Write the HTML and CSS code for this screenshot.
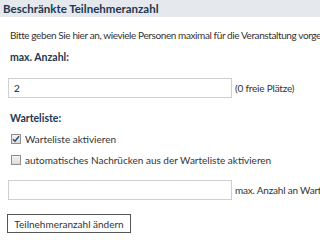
FILE: index.html
```html
<!DOCTYPE html>
<html lang="de">
<head>
<meta charset="UTF-8" />
<title>Beschränkte Teilnehmeranzahl</title>
<link rel="stylesheet" href="styles.css">
</head>
<body>

  <!-- Kopfzeile -->
  <div class="kopf">Beschränkte Teilnehmeranzahl</div>

  <div class="inhalt">
    <p class="hinweis">Bitte geben Sie hier an, wieviele Personen maximal für die Veranstaltung vorgesehen sind.</p>

    <h3 class="feld-titel titel-anzahl">max. Anzahl:</h3>
    <div class="feld-zeile">
      <input type="text" class="eingabe" value="2" />
      <span class="feld-info">(0 freie Plätze)</span>
    </div>

    <h3 class="feld-titel titel-warteliste">Warteliste:</h3>
    <label class="check-zeile">
      <span class="kasten">
        <svg width="8" height="8" viewBox="0 0 8 8"><path d="M1 4.2 L3 6.3 L7 1.2" fill="none" stroke="#2b4a6f" stroke-width="1.4"/></svg>
      </span>
      <span>Warteliste aktivieren</span>
    </label>
    <label class="check-zeile">
      <span class="kasten"></span>
      <span>automatisches Nachrücken aus der Warteliste aktivieren</span>
    </label>

    <div class="feld-zeile zeile-warteliste">
      <input type="text" class="eingabe" value="" />
      <span class="feld-info">max. Anzahl an Wartelistenplätzen</span>
    </div>

    <button class="knopf">Teilnehmeranzahl ändern</button>
  </div>

</body>
</html>
```

FILE: styles.css
```css
:root {
  --dunkel: #22374f;
  --text: #333;
  --rahmen: #cfcfcf;
}

* {
  margin: 0;
  padding: 0;
  box-sizing: border-box;
  font-family: Lato, 'Liberation Sans', sans-serif;
}

body {
  background: #fff;
  color: var(--text);
  font-size: 10px;
  width: 320px;
  height: 240px;
  overflow: hidden;
}

/* Kopfzeile */
.kopf {
  height: 17px;
  line-height: 17px;
  padding-left: 3px;
  background-color: #e5e9ee;
  color: var(--dunkel);
  font-size: 11.5px;
  font-weight: 700;
  white-space: nowrap;
}

.inhalt {
  padding: 11px 0 0 8px;
}

.hinweis {
  padding-left: 2px;
  white-space: nowrap;
  line-height: 14px;
  letter-spacing: -0.4px;
}

/* Überschriften der Felder */
.feld-titel {
  padding-left: 2px;
  color: var(--dunkel);
  font-size: 10.5px;
  font-weight: 700;
  line-height: 14px;
}

.titel-anzahl {
  margin-top: 8px;
}

.titel-warteliste {
  margin-top: 13px;
}

.feld-zeile {
  display: flex;
  align-items: center;
  gap: 3px;
  margin-top: 14px;
  white-space: nowrap;
}

.zeile-warteliste {
  margin-top: 13px;
}

.feld-info {
  letter-spacing: -0.2px;
}

.eingabe {
  flex-shrink: 0;
  width: 224px;
  height: 20px;
  border: 1px solid var(--rahmen);
  padding: 0 5px;
  font-size: 10px;
  color: #222;
  background: #fff;
  outline: none;
}

/* Checkboxen */
.check-zeile {
  display: flex;
  align-items: center;
  gap: 4px;
  padding-left: 3px;
  height: 14px;
  margin-top: 7px;
  white-space: nowrap;
}

.kasten {
  width: 10px;
  height: 10px;
  border: 1px solid #8e8e8e;
  background: linear-gradient(#f4f4f4, #dcdcdc);
  display: flex;
  align-items: center;
  justify-content: center;
}

.knopf {
  display: block;
  margin-top: 14px;
  margin-left: -1px;
  width: 124px;
  height: 19px;
  background: #fff;
  border: 1px solid #555;
  color: var(--text);
  font-size: 10px;
  cursor: pointer;
}
```
